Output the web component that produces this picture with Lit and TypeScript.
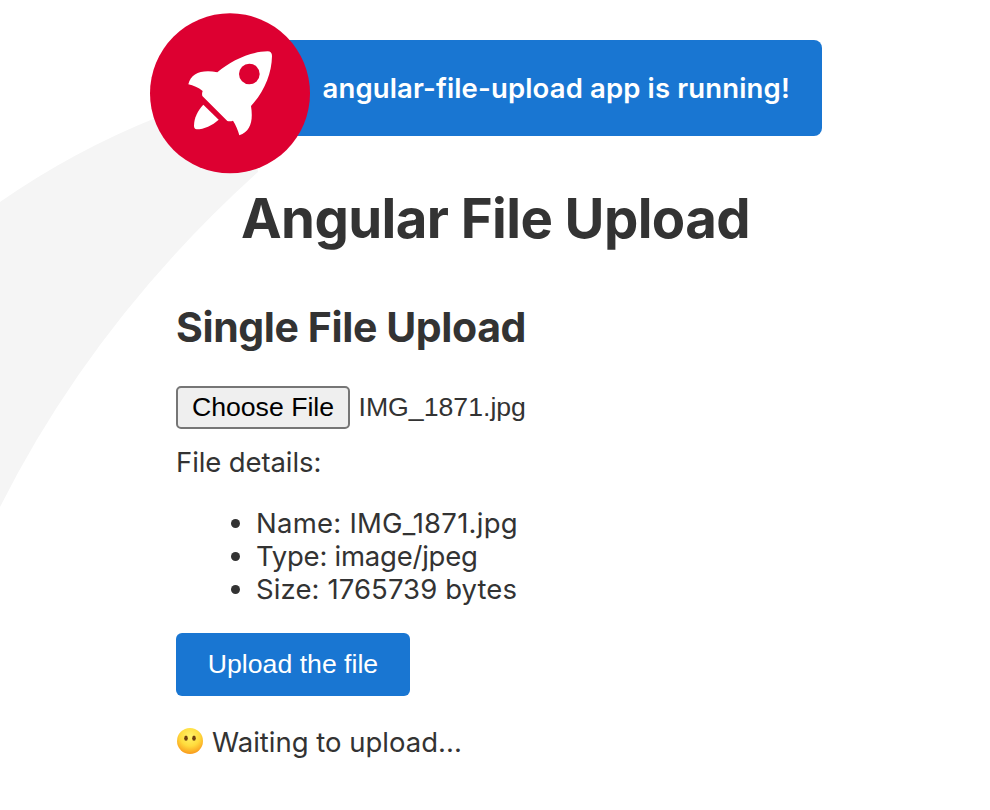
import { LitElement, html, css, svg } from "lit";
import { customElement, state } from "lit/decorators.js";

const rocket = svg`
  <circle cx="270" cy="280" r="240" fill="#dd0031" />
  <path fill="#fff" d="M232 217C272 183 328 155 383 154Q396 154 396 168C395 222 372 276 333 318C340 362 332 394 298 406C294 390 287 375 279 362Q271 365 262 363L187 288Q185 280 188 273C175 262 160 257 145 253C153 220 185 208 232 217Z" />
  <path fill="#fff" d="M190 314L236 359C217 376 192 388 170 388Q162 387 162 377C162 354 173 332 190 314Z" />
  <circle cx="328" cy="222" r="31" fill="#dd0031" />
`;

@customElement("app-root")
export class AppRoot extends LitElement {
  static styles = css`
    :host {
      display: block;
      position: relative;
      height: 810px;
      overflow: hidden;
      background: #fff;
      color: #333;
      font: 27.5px/33px Inter, sans-serif;
      white-space: nowrap;
    }
    .smoke {
      position: absolute;
      left: 0;
      top: 0;
    }
    .content {
      position: relative;
      display: flex;
      flex-direction: column;
      align-items: center;
      padding-top: 40px;
    }
    .banner {
      position: relative;
      box-sizing: border-box;
      width: 654px;
      height: 96px;
      padding-left: 154.5px;
      border-radius: 8px;
      background: #1976d2;
      color: #fff;
      font-weight: 600;
      letter-spacing: 0.14px;
      line-height: 97px;
    }
    .rocket {
      position: absolute;
      left: -18px;
      top: -27px;
    }
    h1 {
      margin: 49px 0 51px;
      padding-left: 1px;
      font-size: 54.5px;
      letter-spacing: -0.6px;
      line-height: 66px;
    }
    .uploader {
      display: flex;
      flex-direction: column;
      align-items: flex-start;
      width: 638px;
    }
    h2 {
      margin: 0 0 34px;
      font-size: 41px;
      letter-spacing: -0.4px;
      line-height: 51px;
      height: 50px;
    }
    .picker {
      display: flex;
      gap: 8.5px;
      margin-bottom: 17px;
      font: 26.667px/43px "Liberation Sans", sans-serif;
    }
    button {
      box-sizing: border-box;
      padding: 0;
      font: 26.667px "Liberation Sans", sans-serif;
    }
    .choose {
      width: 174px;
      height: 43px;
      padding-bottom: 1px;
      border: 2px solid #767676;
      border-radius: 5px;
      background: #efefef;
      color: #000;
      line-height: 38px;
    }
    .details {
      letter-spacing: -0.1px;
    }
    ul {
      margin: 28px 0 27px;
      padding-left: 80px;
    }
    .name {
      letter-spacing: 0.24px;
    }
    .type {
      letter-spacing: -0.24px;
    }
    .size {
      letter-spacing: 0.1px;
    }
    .upload {
      width: 234px;
      height: 63px;
      padding-bottom: 1px;
      border: 0;
      border-radius: 6px;
      background: #1976d2;
      color: #fff;
      line-height: 62px;
    }
    .status {
      display: flex;
      gap: 9px;
      margin-top: 30px;
    }
    .face {
      margin-top: 1px;
    }
  `;

  @state() private file = { name: "IMG_1871.jpg", type: "image/jpeg", size: 1765739 };

  render() {
    return html`
      <svg class="smoke" width="280" height="520">
        <path fill="#f5f5f5" d="M0 202Q73 151 158 117L250 110L258 172Q94 320 0 507Z" />
      </svg>
      <div class="content">
        <div class="banner">
          <svg class="rocket" width="160" height="161" viewBox="30 39 480 483">${rocket}</svg>
          <span class="running">angular-file-upload app is running!</span>
        </div>
        <h1><span>Angular File Upload</span></h1>
        <div class="uploader">
          <h2>Single File Upload</h2>
          <div class="picker">
            <button class="choose">Choose File</button>
            <span class="chosen">${this.file.name}</span>
          </div>
          <div class="details">File details:</div>
          <ul>
            <li class="name">Name: ${this.file.name}</li>
            <li class="type">Type: ${this.file.type}</li>
            <li class="size">Size: ${this.file.size} bytes</li>
          </ul>
          <button class="upload">Upload the file</button>
          <div class="status">
            <svg class="face" width="27" height="28" viewBox="0 0 27 28">
              <defs>
                <radialGradient id="skin" cx="50%" cy="32%" r="68%">
                  <stop offset="0" stop-color="#fff36a" />
                  <stop offset=".55" stop-color="#ffdc3d" />
                  <stop offset="1" stop-color="#f99a1c" />
                </radialGradient>
              </defs>
              <circle cx="14" cy="14" r="13" fill="url(#skin)" />
              <ellipse cx="10" cy="11.2" rx="1.8" ry="2.6" fill="#70400f" />
              <ellipse cx="18" cy="11.2" rx="1.8" ry="2.6" fill="#70400f" />
            </svg>
            <span class="waiting">Waiting to upload...</span>
          </div>
        </div>
      </div>
    `;
  }
}
